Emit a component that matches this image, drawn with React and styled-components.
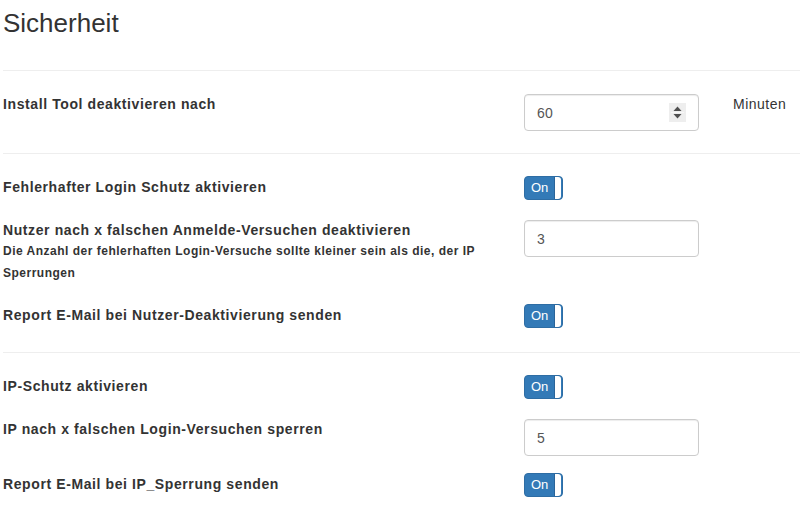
import styled, { createGlobalStyle } from "styled-components";

const GlobalStyle = createGlobalStyle`
    html, body {
        margin: 0;
        padding: 0;
        background: #fff;
    }
    body {
        font-family: "Liberation Sans", Arial, Helvetica, sans-serif;
        font-size: 14px;
        line-height: 20px;
        color: #333;
    }
`;

const Page = styled.div`
    padding-left: 3px;
`;

const Header = styled.div`
    height: 71px;
    padding-top: 9px;
    box-sizing: border-box;
    border-bottom: 1px solid #eee;
`;

const Title = styled.h1`
    margin: 0;
    font-size: 26px;
    font-weight: normal;
    line-height: 1.1;
    color: #333;
`;

const Section = styled.div`
    display: flex;
    flex-direction: column;
    padding: ${({ $top }) => $top}px 0 ${({ $bottom }) => $bottom}px;
    border-bottom: ${({ $last }) => ($last ? "none" : "1px solid #eee")};
`;

const Row = styled.div`
    display: grid;
    grid-template-columns: 521px 175px auto;
    align-items: start;
    margin-top: ${({ $space }) => $space || 0}px;
`;

const Label = styled.div`
    font-weight: bold;
    font-size: 14px;
    line-height: 20px;
    letter-spacing: 0.6px;
    padding-top: ${({ $pt }) => $pt || 0}px;
`;

const Help = styled.div`
    font-size: 12px;
    font-weight: bold;
    line-height: 22px;
    letter-spacing: 0.5px;
    width: 480px;
`;

const Addon = styled.div`
    padding-left: 34px;
    line-height: 20px;
    letter-spacing: 0.5px;
    color: #333;
`;

const InputWrap = styled.div`
    position: relative;
    width: 175px;
`;

const Input = styled.input`
    display: block;
    box-sizing: border-box;
    width: 100%;
    height: 37px;
    padding: 6px 12px;
    border: 1px solid #ccc;
    border-radius: 4px;
    font-family: "Liberation Sans", Arial, sans-serif;
    font-size: 14px;
    letter-spacing: 0.3px;
    color: #555;
    background: #fff;
    box-shadow: inset 0 1px 1px rgba(0, 0, 0, 0.075);
    outline: none;
`;

const Spinner = styled.svg`
    position: absolute;
    right: 13px;
    top: 9px;
`;

const Toggle = styled.div`
    display: flex;
    box-sizing: border-box;
    width: 39px;
    height: 24px;
    background: #337ab7;
    border: 1px solid #2e6da4;
    border-radius: 4px;
    overflow: hidden;
`;

const ToggleText = styled.span`
    flex: 1;
    color: #fff;
    font-size: 13px;
    line-height: 22px;
    padding-left: 6px;
`;

const Handle = styled.span`
    width: 6px;
    margin: 0 1px 0 0;
    background: #fff;
    border-left: 1px solid #2a6499;
    border-radius: 0 3px 3px 0;
`;

const NumberSpinner = () => (
    <Spinner width="17" height="19" viewBox="0 0 17 19">
        <rect width="17" height="19" fill="#eeeeee" />
        <line x1="2" y1="9.5" x2="15" y2="9.5" stroke="#f8f8f8" strokeWidth="1" />
        <path d="M4.5 8 L8.5 3.5 L12.5 8 Z" fill="#505050" />
        <path d="M4.5 11 L8.5 15.5 L12.5 11 Z" fill="#505050" />
    </Spinner>
);

const Switch = () => (
    <Toggle>
        <ToggleText>On</ToggleText>
        <Handle />
    </Toggle>
);

const Field = ({ value, spinner }) => (
    <InputWrap>
        <Input type="text" defaultValue={value} />
        {spinner && <NumberSpinner />}
    </InputWrap>
);

const App = () => {
    return (
        <Page>
            <GlobalStyle />
            <Header>
                <Title>Sicherheit</Title>
            </Header>

            <Section $top={23} $bottom={22}>
                <Row>
                    <Label>Install Tool deaktivieren nach</Label>
                    <Field value="60" spinner />
                    <Addon>Minuten</Addon>
                </Row>
            </Section>

            <Section $top={22} $bottom={24}>
                <Row>
                    <Label $pt={1}>Fehlerhafter Login Schutz aktivieren</Label>
                    <Switch />
                </Row>
                <Row $space={20}>
                    <div>
                        <Label>Nutzer nach x falschen Anmelde-Versuchen deaktivieren</Label>
                        <Help>Die Anzahl der fehlerhaften Login-Versuche sollte kleiner sein als die, der IP Sperrungen</Help>
                    </div>
                    <Field value="3" />
                </Row>
                <Row $space={20}>
                    <Label $pt={1}>Report E-Mail bei Nutzer-Deaktivierung senden</Label>
                    <Switch />
                </Row>
            </Section>

            <Section $top={22} $bottom={20} $last>
                <Row>
                    <Label $pt={1}>IP-Schutz aktivieren</Label>
                    <Switch />
                </Row>
                <Row $space={20}>
                    <Label>IP nach x falschen Login-Versuchen sperren</Label>
                    <Field value="5" />
                </Row>
                <Row $space={17}>
                    <Label $pt={1}>Report E-Mail bei IP_Sperrung senden</Label>
                    <Switch />
                </Row>
            </Section>
        </Page>
    );
};

export default App;
